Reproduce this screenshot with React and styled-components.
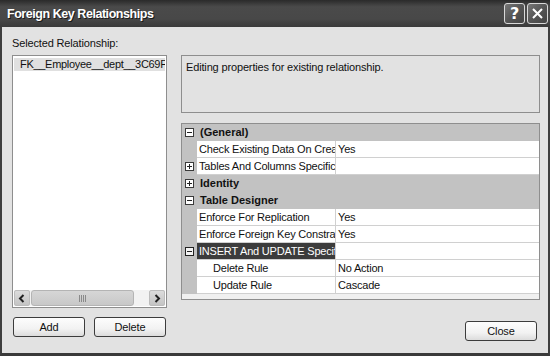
import React from "react";
import styled, { createGlobalStyle } from "styled-components";

const GlobalStyle = createGlobalStyle`
  html, body {
    margin: 0;
    padding: 0;
    background: #e2e2e2;
  }
  body {
    font-family: "Liberation Sans", Arial, sans-serif;
    font-size: 11px;
    letter-spacing: -0.15px;
    color: #111;
  }
`;

const Window = styled.div`
  width: 550px;
  height: 356px;
  box-sizing: border-box;
  display: flex;
  flex-direction: column;
  background: #e2e2e2;
  overflow: hidden;
`;

const TitleBar = styled.div`
  height: 27px;
  flex: none;
  display: flex;
  align-items: center;
  justify-content: space-between;
  padding: 0 2px 0 7px;
  background: linear-gradient(#2a2a2a 0%, #4a4a4a 25%, #484848 70%, #3a3a3a 100%);
`;

const Title = styled.div`
  color: #fff;
  font-family: "Liberation Sans", Arial, sans-serif;
  font-weight: bold;
  font-size: 12.5px;
  letter-spacing: -0.45px;
  text-shadow: 1px 1px 0 #1a1a1a;
`;

const CaptionButtons = styled.div`
  display: flex;
  gap: 2px;
`;

const CaptionButton = styled.div`
  width: 19px;
  height: 19px;
  border: 1px solid #d8d8d8;
  border-radius: 3px;
  background: linear-gradient(135deg, #777 0%, #555 50%, #444 100%);
  color: #fff;
  display: flex;
  align-items: center;
  justify-content: center;
  font-weight: bold;
  font-size: 16px;
  font-family: "DejaVu Sans", sans-serif;
`;

const Body = styled.div`
  flex: 1;
  display: flex;
  flex-direction: column;
  padding: 9px 8px 0 10px;
  border-left: 2px solid #3e3e3e;
  border-right: 2px solid #3e3e3e;
  border-bottom: 3px solid #3a3a3a;
`;

const Label = styled.div`
  height: 14px;
  line-height: 14px;
  margin-bottom: 5px;
`;

const Main = styled.div`
  display: flex;
  gap: 14px;
`;

const LeftColumn = styled.div`
  width: 155px;
  display: flex;
  flex-direction: column;
`;

const RightColumn = styled.div`
  flex: 1;
  display: flex;
  flex-direction: column;
`;

const ListBox = styled.div`
  height: 253px;
  box-sizing: border-box;
  border: 1px solid #8e8e8e;
  background: #fff;
  display: flex;
  flex-direction: column;
  padding: 2px 1px 1px 1px;
`;

const ListItems = styled.div`
  flex: 1;
  overflow: hidden;
`;

const ListItem = styled.div`
  height: 13px;
  line-height: 13px;
  padding-left: 6px;
  white-space: nowrap;
  overflow: hidden;
  letter-spacing: -0.3px;
  background: ${(p) => (p.selected ? "#e0e0e0" : "transparent")};
`;

const ScrollBar = styled.div`
  height: 16px;
  display: flex;
  background: #f2f2f2;
`;

const ScrollArrow = styled.div`
  width: 16px;
  height: 16px;
  box-sizing: border-box;
  border: 1px solid #bcbcbc;
  border-radius: 2px;
  background: linear-gradient(#dcdcdc, #c4c4c4);
  display: flex;
  align-items: center;
  justify-content: center;
`;

const ScrollTrack = styled.div`
  flex: 1;
  padding: 0 1px;
  display: flex;
`;

const ScrollThumb = styled.div`
  width: 103px;
  box-sizing: border-box;
  border: 1px solid #b4b4b4;
  border-radius: 3px;
  background: linear-gradient(#d6d6d6, #c8c8c8);
  display: flex;
  align-items: center;
  justify-content: center;
  gap: 1px;

  span {
    width: 1px;
    height: 7px;
    background: #8a8a8a;
  }
`;

const ButtonRow = styled.div`
  display: flex;
  gap: 9px;
  padding-left: 1px;
  margin-top: 9px;
`;

const Button = styled.div`
  width: 72px;
  height: 20px;
  box-sizing: border-box;
  border: 1px solid #3c3c3c;
  border-radius: 3px;
  background: linear-gradient(#fdfdfd 0%, #f2f2f2 60%, #dcdcdc 100%);
  display: flex;
  align-items: center;
  justify-content: center;
  font-size: 11px;
`;

const Description = styled.div`
  height: 58px;
  box-sizing: border-box;
  border: 1px solid #8e8e8e;
  padding: 5px 4px;
  line-height: 13px;
`;

const Grid = styled.div`
  height: 177px;
  box-sizing: border-box;
  margin-top: 10px;
  border: 1px solid #8e8e8e;
  background: #f0f0f0;
  display: flex;
  flex-direction: column;
  letter-spacing: -0.2px;
`;

const Row = styled.div`
  height: 17px;
  flex: none;
  display: flex;
`;

const Margin = styled.div`
  width: 15px;
  flex: none;
  background: #c2c2c2;
  display: flex;
  align-items: center;
  justify-content: center;
`;

const CategoryLabel = styled.div`
  flex: 1;
  background: #c2c2c2;
  padding-left: 3px;
  font-weight: bold;
  line-height: 17px;
  letter-spacing: 0;
`;

const NameCell = styled.div`
  width: 139px;
  flex: none;
  box-sizing: border-box;
  padding-left: ${(p) => (p.indent ? 16 : 2)}px;
  border-right: 1px solid #d0d0d0;
  border-bottom: 1px solid #d0d0d0;
  background: ${(p) => (p.selected ? "#3c3c3c" : "#fff")};
  color: ${(p) => (p.selected ? "#fff" : "#111")};
  line-height: 16px;
  white-space: nowrap;
  overflow: hidden;
`;

const ValueCell = styled.div`
  flex: 1;
  box-sizing: border-box;
  padding-left: 2px;
  border-bottom: 1px solid #d0d0d0;
  background: #fff;
  line-height: 16px;
  white-space: nowrap;
  overflow: hidden;
`;

const Expander = styled.div`
  width: 9px;
  height: 9px;
  box-sizing: border-box;
  border: 1px solid ${(p) => (p.strong ? "#222" : "#3a3a3a")};
  background: ${(p) => (p.strong ? "#f4f4f4" : "#fff")};
  position: relative;

  &::before {
    content: "";
    position: absolute;
    left: 1px;
    right: 1px;
    top: 3px;
    height: 1px;
    background: #222;
  }

  &::after {
    content: "";
    display: ${(p) => (p.open ? "none" : "block")};
    position: absolute;
    top: 1px;
    bottom: 1px;
    left: 3px;
    width: 1px;
    background: #222;
  }
`;

const Footer = styled.div`
  display: flex;
  justify-content: flex-end;
  padding-right: 3px;
  margin-top: 21px;
`;

const Arrow = ({ dir }) => (
  <svg width="8" height="9" viewBox="0 0 8 9">
    <path
      d={dir === "left" ? "M5.5 1 L2 4.5 L5.5 8" : "M2.5 1 L6 4.5 L2.5 8"}
      fill="none"
      stroke="#222"
      strokeWidth="2"
    />
  </svg>
);

const rows = [
  { cat: true, label: "(General)", open: true },
  { name: "Check Existing Data On Creation Or Re-Enabling", value: "Yes" },
  { name: "Tables And Columns Specification", value: "", expander: "closed" },
  { cat: true, label: "Identity", open: false },
  { cat: true, label: "Table Designer", open: true },
  { name: "Enforce For Replication", value: "Yes" },
  { name: "Enforce Foreign Key Constraint", value: "Yes" },
  { name: "INSERT And UPDATE Specification", value: "", expander: "open", selected: true },
  { name: "Delete Rule", value: "No Action", indent: true },
  { name: "Update Rule", value: "Cascade", indent: true },
];

const App = () => {
  return (
    <Window>
      <GlobalStyle />
      <TitleBar>
        <Title>Foreign Key Relationships</Title>
        <CaptionButtons>
          <CaptionButton>?</CaptionButton>
          <CaptionButton>
            <svg width="13" height="13" viewBox="0 0 13 13">
              <path d="M2 2 L11 11 M11 2 L2 11" stroke="#fff" strokeWidth="2" />
            </svg>
          </CaptionButton>
        </CaptionButtons>
      </TitleBar>
      <Body>
        <Label>Selected Relationship:</Label>
        <Main>
          <LeftColumn>
            <ListBox>
              <ListItems>
                <ListItem selected>FK__Employee__dept__3C69FB99</ListItem>
              </ListItems>
              <ScrollBar>
                <ScrollArrow>
                  <Arrow dir="left" />
                </ScrollArrow>
                <ScrollTrack>
                  <ScrollThumb>
                    <span />
                    <span />
                    <span />
                    <span />
                  </ScrollThumb>
                </ScrollTrack>
                <ScrollArrow>
                  <Arrow dir="right" />
                </ScrollArrow>
              </ScrollBar>
            </ListBox>
            <ButtonRow>
              <Button>Add</Button>
              <Button>Delete</Button>
            </ButtonRow>
          </LeftColumn>
          <RightColumn>
            <Description>Editing properties for existing relationship.</Description>
            <Grid>
              {rows.map((r, i) =>
                r.cat ? (
                  <Row key={i}>
                    <Margin>
                      <Expander open={r.open} />
                    </Margin>
                    <CategoryLabel>{r.label}</CategoryLabel>
                  </Row>
                ) : (
                  <Row key={i}>
                    <Margin>
                      {r.expander && (
                        <Expander open={r.expander === "open"} strong={r.selected} />
                      )}
                    </Margin>
                    <NameCell indent={r.indent} selected={r.selected}>
                      {r.name}
                    </NameCell>
                    <ValueCell>{r.value}</ValueCell>
                  </Row>
                )
              )}
            </Grid>
            <Footer>
              <Button>Close</Button>
            </Footer>
          </RightColumn>
        </Main>
      </Body>
    </Window>
  );
};

export default App;
